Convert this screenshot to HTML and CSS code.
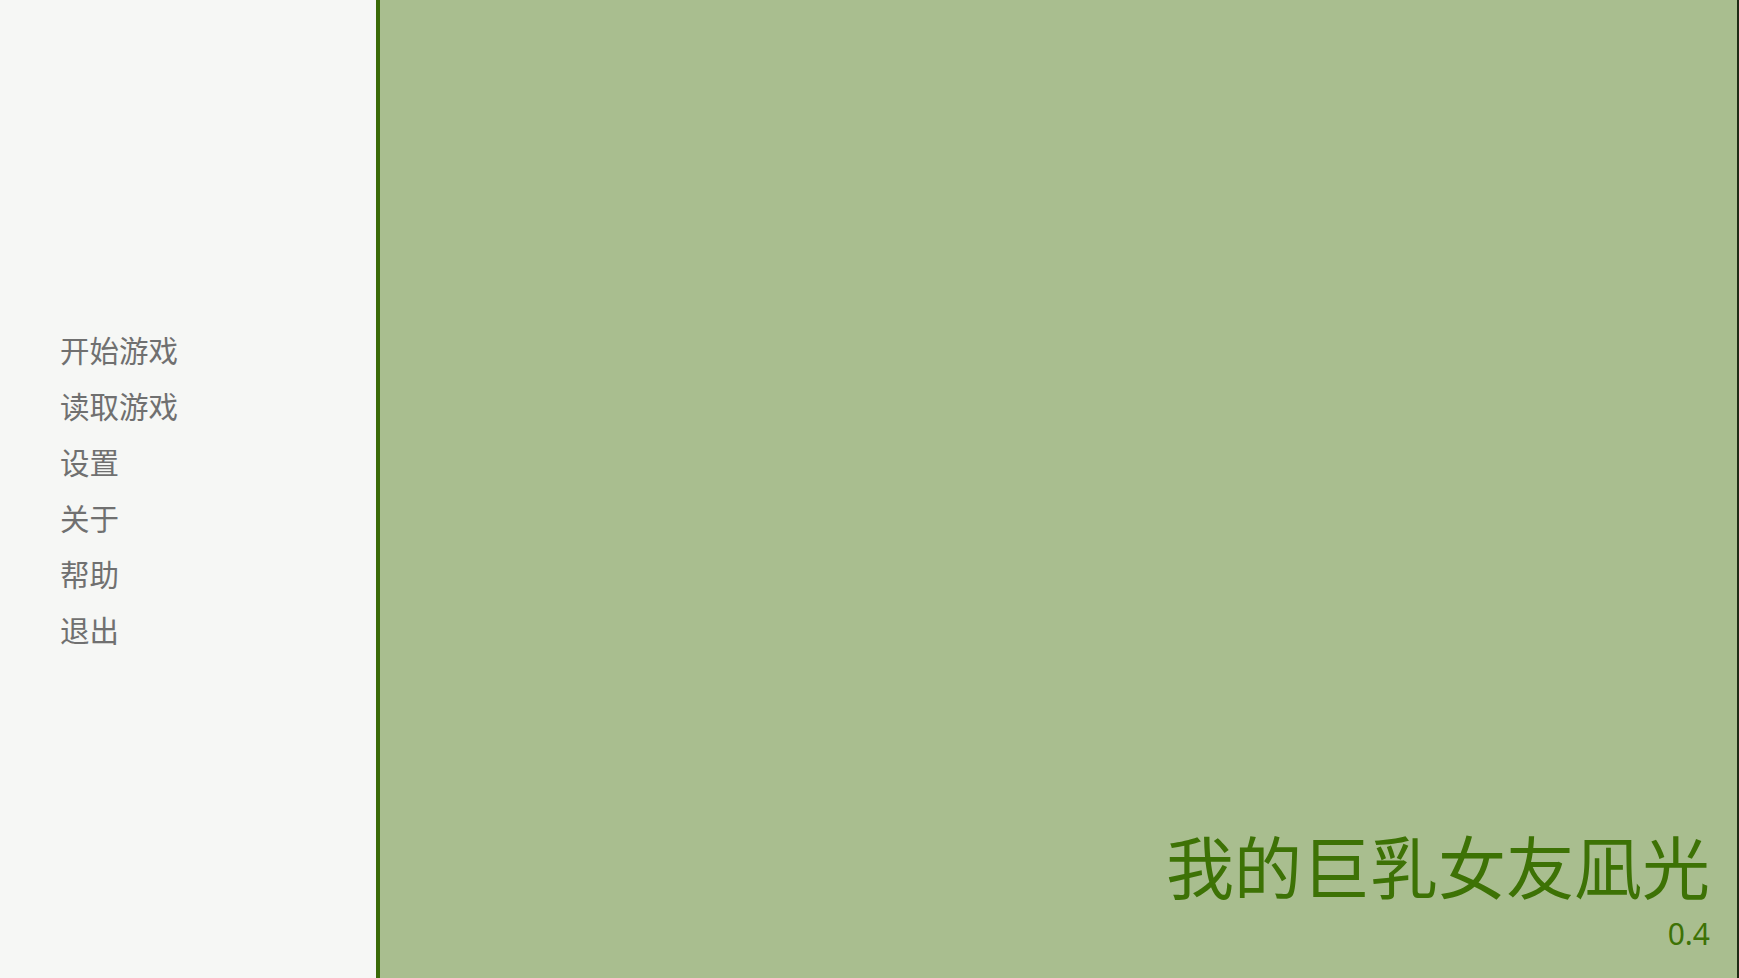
FILE: index.html
```html
<!DOCTYPE html>
<html lang="zh-CN">
<head>
<meta charset="utf-8">
<title>我的巨乳女友凪光</title>
<link rel="stylesheet" href="styles.css">
</head>
<body>
<div class="screen">
  <nav class="sidebar">
    <ul class="menu">
      <li class="menu-item">开始游戏</li>
      <li class="menu-item">读取游戏</li>
      <li class="menu-item">设置</li>
      <li class="menu-item">关于</li>
      <li class="menu-item">帮助</li>
      <li class="menu-item">退出</li>
    </ul>
  </nav>
  <main class="stage">
    <div class="title-block">
      <h1 class="game-title">我的巨乳女友凪光</h1>
      <p class="game-version">0.4</p>
    </div>
  </main>
</div>
</body>
</html>
```
FILE: styles.css
```css
html, body {
  margin: 0;
  padding: 0;
  height: 100%;
}

body {
  font-family: "Noto Sans CJK SC", "Noto Sans", sans-serif;
  background: #a9be8f;
  overflow: hidden;
}

.screen {
  display: flex;
  height: 100vh;
  border-right: 2px solid #1f2b14;
  box-sizing: border-box;
}

/* left navigation panel */
.sidebar {
  width: 376px;
  flex: none;
  background: #f6f7f5;
  border-right: 4px solid #3a6b08;
  display: flex;
  flex-direction: column;
  justify-content: center;
}

.menu {
  list-style: none;
  margin: 0;
  padding: 0 0 0 60px;
}

.menu-item {
  font-size: 29.5px;
  line-height: 56px;
  color: #707070;
}

/* main area with the game title in the lower right */
.stage {
  flex: 1;
  display: flex;
  flex-direction: column;
  justify-content: flex-end;
  align-items: flex-end;
  padding: 0 27px 24px 0;
}

.title-block {
  display: flex;
  flex-direction: column;
  align-items: flex-end;
}

.game-title {
  margin: 0 0 15px;
  font-size: 68px;
  font-weight: 400;
  line-height: 68px;
  color: #3d7205;
}

.game-version {
  margin: 0;
  font-family: "Noto Sans", sans-serif;
  font-size: 30px;
  line-height: 40px;
  color: #3d7205;
}
```
